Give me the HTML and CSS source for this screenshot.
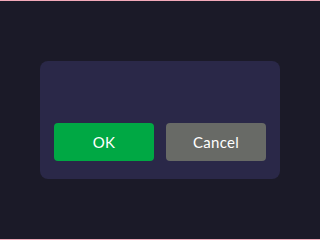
FILE: index.html
```html
<!DOCTYPE html>
<html lang="en">
<head>
    <meta charset="UTF-8">
    <meta name="viewport" content="width=device-width, initial-scale=1.0">
    <title>Dialog</title>
    <link rel="stylesheet" href="styles.css">
</head>
<body>
    <div class="screen">
        <div class="dialog">
            <div class="dialog-body"></div>
            <div class="dialog-actions">
                <button class="btn btn-ok">OK</button>
                <button class="btn btn-cancel">Cancel</button>
            </div>
        </div>
    </div>
</body>
</html>
```

FILE: styles.css
```css
html, body {
    margin: 0;
    padding: 0;
}

body {
    font-family: Lato, "Open Sans", sans-serif;
    background-color: #1b1a28;
}

.screen {
    box-sizing: border-box;
    width: 320px;
    height: 240px;
    border-top: 1px solid #f2a9b9;
    border-bottom: 1px solid #f2a9b9;
    display: flex;
    align-items: center;
    justify-content: center;
}

.dialog {
    box-sizing: border-box;
    width: 240px;
    height: 118px;
    background: #2a2848;
    border-radius: 8px;
    padding: 0 14px 18px;
    display: flex;
    flex-direction: column;
    justify-content: flex-end;
}

.dialog-actions {
    display: flex;
    gap: 12px;
}

.btn {
    flex: 1;
    height: 38px;
    border: none;
    border-radius: 4px;
    color: #ffffff;
    font-family: inherit;
    font-size: 15px;
    letter-spacing: 0.3px;
    padding: 0;
}

.btn-ok {
    background-color: #00a844;
}

.btn-cancel {
    background-color: #686a66;
}
```
